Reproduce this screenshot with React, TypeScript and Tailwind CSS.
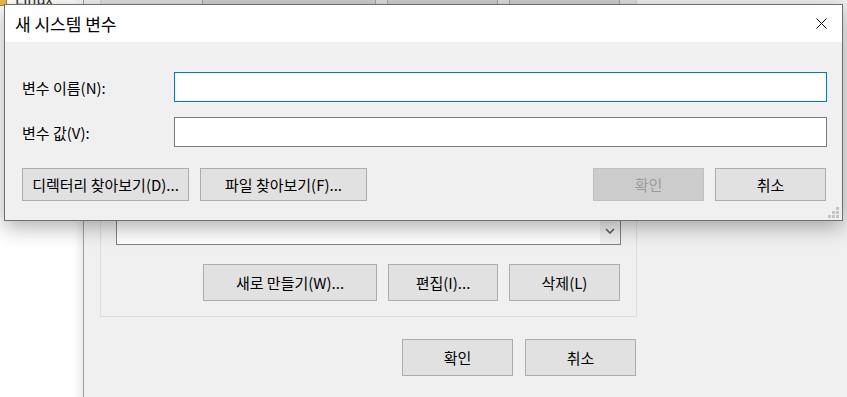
import React from 'react';

function WinButton({ label, className = '', disabled = false }: { label: string; className?: string; disabled?: boolean }) {
  return (
    <div
      className={
        'flex items-center justify-center border text-[15px] leading-none ' +
        (disabled
          ? 'bg-[#cccccc] border-[#bfbfbf] text-[#9b9b9b] '
          : 'bg-[#e1e1e1] border-[#adadad] text-black ') +
        className
      }
    >
      {label}
    </div>
  );
}

function Grip() {
  return (
    <svg width="11" height="11" viewBox="0 0 11 11" className="absolute right-[3px] bottom-[2px]">
      <rect x="8" y="0" width="3" height="3" fill="#c4c4c4" />
      <rect x="4" y="4" width="3" height="3" fill="#c4c4c4" />
      <rect x="8" y="4" width="3" height="3" fill="#c4c4c4" />
      <rect x="0" y="8" width="3" height="3" fill="#c4c4c4" />
      <rect x="4" y="8" width="3" height="3" fill="#c4c4c4" />
      <rect x="8" y="8" width="3" height="3" fill="#c4c4c4" />
    </svg>
  );
}

// 뒤쪽 환경 변수 창
function BackWindow() {
  return (
    <div className="absolute left-[83px] top-0 w-[780px] h-[420px] flex flex-col border-l border-[#a0a0a0] bg-[#f0f0f0] shadow-[-2px_0_10px_rgba(0,0,0,0.12)]">
      {/* 위쪽 그룹 (가려짐) */}
      <div className="ml-[16px] w-[537px] h-[4px] flex justify-end gap-[11px] pr-[16px] border-x border-[#d0d0d0] bg-[#dedede]">
        <div className="w-[174px] bg-[#cfcfcf] border-x border-[#a5a5a5]" />
        <div className="w-[111px] bg-[#cfcfcf] border-x border-[#a5a5a5]" />
        <div className="w-[111px] bg-[#cfcfcf] border-x border-[#a5a5a5]" />
      </div>

      {/* 시스템 변수 그룹 */}
      <div className="ml-[16px] w-[537px] h-[313px] flex flex-col justify-end px-[15px] pb-[15px] border-x border-b border-[#dcdcdc]">
        <div className="h-[60px] flex justify-end border border-[#828282] bg-white">
          <div className="w-[20px] flex flex-col bg-[#f0f0f0]">
            <div className="flex-1 bg-[#d6d6d6]" />
            <div className="h-[26px] flex items-center justify-center">
              <svg width="10" height="6" viewBox="0 0 10 6">
                <path d="M1 1 L5 5 L9 1" fill="none" stroke="#606060" strokeWidth="1.6" />
              </svg>
            </div>
          </div>
        </div>
        <div className="mt-[19px] flex justify-end gap-[11px] pr-[1px]">
          <WinButton label="새로 만들기(W)..." className="w-[174px] h-[37px]" />
          <WinButton label="편집(I)..." className="w-[110px] h-[37px]" />
          <WinButton label="삭제(L)" className="w-[111px] h-[37px]" />
        </div>
      </div>

      <div className="ml-[16px] w-[537px] mt-[22px] flex justify-end gap-[12px] pr-[1px]">
        <WinButton label="확인" className="w-[111px] h-[37px]" />
        <WinButton label="취소" className="w-[111px] h-[37px]" />
      </div>
    </div>
  );
}

// 새 시스템 변수 대화상자
function Dialog() {
  return (
    <div className="absolute left-[4px] top-[4px] w-[839px] h-[217px] flex flex-col border border-[#6f6f6f] bg-[#f0f0f0] shadow-[0_6px_20px_rgba(0,0,0,0.32)]">
      <div className="h-[37px] flex items-center justify-between bg-white pl-[10px] pr-[15px]">
        <span className="text-[17px] leading-none">새 시스템 변수</span>
        <svg width="11" height="11" viewBox="0 0 11 11">
          <path d="M0.5 0.5 L10.5 10.5 M10.5 0.5 L0.5 10.5" stroke="#000" strokeWidth="1" />
        </svg>
      </div>

      <div className="relative flex-1 flex flex-col pl-[17px] pr-[15px]">
        <div className="mt-[30px] flex items-center">
          <span className="w-[152px] text-[15px] leading-none">변수 이름(N):</span>
          <div className="flex-1 h-[30px] border border-[#0078d7] bg-white" />
        </div>
        <div className="mt-[15px] flex items-center">
          <span className="w-[152px] text-[15px] leading-none">변수 값(V):</span>
          <div className="flex-1 h-[30px] border border-[#7a7a7a] bg-white" />
        </div>
        <div className="mt-[21px] flex items-center gap-[11px] pr-[1px]">
          <WinButton label="디렉터리 찾아보기(D)..." className="w-[167px] h-[33px]" />
          <WinButton label="파일 찾아보기(F)..." className="w-[167px] h-[33px]" />
          <div className="flex-1" />
          <WinButton label="확인" disabled className="w-[111px] h-[33px]" />
          <WinButton label="취소" className="w-[111px] h-[33px]" />
        </div>
        <Grip />
      </div>
    </div>
  );
}

export default function App() {
  return (
    <div className="relative w-[847px] h-[397px] overflow-hidden bg-white text-black font-['Noto_Sans_CJK_KR',sans-serif]">
      {/* 탐색기 항목 (위쪽에 일부 보임) */}
      <div className="absolute left-0 top-[-10px] flex items-end gap-[8px]">
        <div className="w-[14px] h-[16px] rounded-[2px] bg-[#e8b84a] border border-[#b8862a] -ml-[7px]" />
        <span className="text-[15px] leading-none text-[#333]">Linux</span>
      </div>
      <BackWindow />
      <Dialog />
    </div>
  );
}
